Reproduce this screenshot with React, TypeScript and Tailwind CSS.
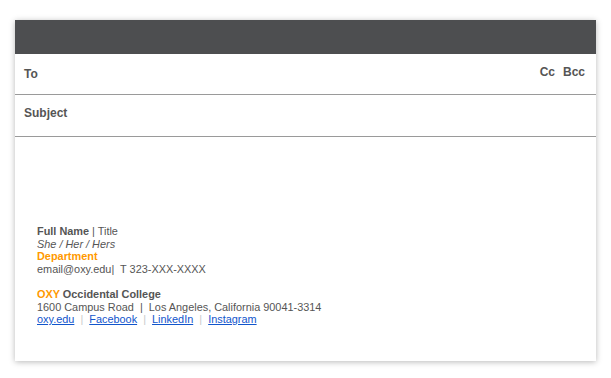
import React from "react";

const links = ["oxy.edu", "Facebook", "LinkedIn", "Instagram"];

const App: React.FC = () => {
  return (
    <div className="min-h-[378px] w-full bg-white px-[15px] pt-[20px] font-['Liberation_Sans',Arial,sans-serif]">
      <div className="h-[341px] w-full bg-white shadow-[0_1px_6px_rgba(0,0,0,0.28)]">
        {/* title bar */}
        <div className="h-[34px] bg-[#4d4e50]" />

        {/* recipients */}
        <div className="flex h-[41px] items-center justify-between border-b border-[#9a9a9a] pl-[9px] pr-[11px] text-[12px] font-bold text-[#555]">
          <span>To</span>
          <div className="flex gap-[8px] pb-[5px]">
            <span>Cc</span>
            <span>Bcc</span>
          </div>
        </div>

        <div className="flex h-[42px] items-center border-b border-[#9a9a9a] pb-[5px] pl-[9px] text-[12px] font-bold text-[#555]">
          Subject
        </div>

        {/* signature */}
        <div className="pl-[22px] pt-[88px] text-[10.9px] leading-[12.6px] text-[#555]">
          <div>
            <span className="font-bold">Full Name</span> | Title
          </div>
          <div className="italic">She / Her / Hers</div>
          <div className="font-bold text-[#ff9900]">Department</div>
          <div>email@oxy.edu|&nbsp; T 323-XXX-XXXX</div>
          <div className="h-[12.6px]" />
          <div className="font-bold">
            <span className="text-[#ff9900]">OXY</span> Occidental College
          </div>
          <div>1600 Campus Road &nbsp;|&nbsp; Los Angeles, California 90041-3314</div>
          <div>
            {links.map((l, i) => (
              <React.Fragment key={l}>
                {i > 0 && <span className="text-[#ccc]"> &nbsp;|&nbsp; </span>}
                <a href="#" className="text-[#1155cc] underline">
                  {l}
                </a>
              </React.Fragment>
            ))}
          </div>
        </div>
      </div>
    </div>
  );
};

export default App;
